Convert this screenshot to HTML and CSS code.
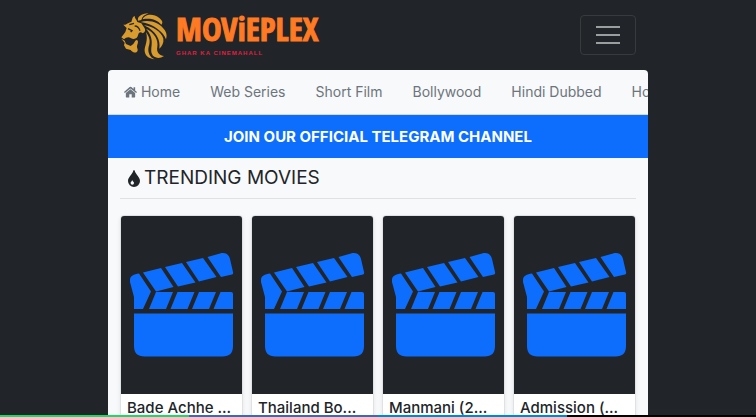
FILE: index.html
```
<!DOCTYPE html>
<html lang="en">
<head>
<meta charset="utf-8">
<meta name="viewport" content="width=device-width, initial-scale=1">
<title>Movieplex</title>
<link rel="stylesheet" href="styles.css">
</head>
<body>
<svg class="sprite" aria-hidden="true">
  <symbol id="clapper" viewBox="0 0 121 178">
    <path d="M9 64C9 60 13 58 18 57.500L30 75.500L22 93H13V81L9 66Z"/>
    <path d="M22 56.500L40 52L52.500 71L35 75.500Z"/>
    <path d="M44 51L61 47L74.500 66.500L57 70.500Z"/>
    <path d="M65 46L82 42L95.500 61L78 65.500Z"/>
    <path d="M86.500 41L99 37.500C105 36 108 39 109 43L112 56Q112.500 58 111 58.500L100 61Z"/>
    <path d="M35 76H52L45 93H28Z"/>
    <path d="M56.500 76H73.500L66.500 93H49.500Z"/>
    <path d="M78 76H95L88 93H71Z"/>
    <path d="M99.500 76H110Q112 76 112 78V93H92.500Z"/>
    <path d="M13 97.500H112V130Q112 140.500 101.500 140.500H23.500Q13 140.500 13 130Z"/>
  </symbol>
</svg>

<header class="topbar container">
  <a class="brand" href="#">
    <svg class="lion" viewBox="0 3 162 156" aria-hidden="true">
      <path d="M26 60L16 50C26 52 28 44 40 42C44 32 42 28 50 24C50 32 56 34 58 42L70 46L78 58C84 66 82 72 74 76C68 70 62 72 60 82C58 92 48 96 38 90C32 86 24 88 18 94L10 88C14 82 18 78 22 72Z"/>
      <path d="M10 92L20 98L24 108L38 114L46 108L52 98C60 92 62 102 58 110C54 120 62 122 58 130C54 138 42 132 38 126L24 122L18 112L20 104Z"/>
      <path d="M60 38C58 26 68 18 92 16C80 20 72 26 70 36Z"/>
      <path d="M74 34C78 20 104 14 124 30C136 40 134 46 130 50C116 34 96 30 74 34Z"/>
      <path d="M68 42C92 34 124 42 140 66C148 78 146 88 144 94C138 74 108 48 68 42Z"/>
      <path d="M78 52C104 54 130 72 136 92C138 104 132 114 124 122C128 96 116 70 78 52Z"/>
      <path d="M84 62C108 72 122 96 118 116C114 134 126 142 138 144C124 154 106 150 102 138C94 118 114 96 84 62Z"/>
      <path d="M84 72C98 92 96 104 92 116C88 134 96 148 110 154C92 152 82 144 80 130C78 116 92 98 84 72Z"/>
      <path class="cut" d="M30 62L42 68L38 72M50 54C60 54 64 62 66 68M34 50L48 46"/>
    </svg>
    <span class="wordmark">
      <span class="wordmark-name">MOViEPLEX</span>
      <span class="wordmark-tag">GHAR KA CINEMAHALL</span>
    </span>
  </a>
  <button class="toggler" type="button" aria-label="Toggle navigation">
    <svg viewBox="0 0 30 30" aria-hidden="true"><path d="M3 7h24M3 15h24M3 23h24"/></svg>
  </button>
</header>

<main class="panel container">
  <nav class="categories">
    <a href="#"><svg class="home" viewBox="0 0 14 12" aria-hidden="true"><path d="M7 3L2 7.200V11.500Q2 12 2.500 12H5.700V8.500H8.300V12H11.500Q12 12 12 11.500V7.200ZM14 6L12 4.300V1H10.300V2.800L7.900.7Q7 0 6.100.7L0 6L.9 7.200L7 2.100L13.100 7.200Z"/></svg> Home</a>
    <a href="#">Web Series</a>
    <a href="#">Short Film</a>
    <a href="#">Bollywood</a>
    <a href="#">Hindi Dubbed</a>
    <a href="#">Hollywood</a>
  </nav>
  <a class="telegram" href="#">JOIN OUR OFFICIAL TELEGRAM CHANNEL</a>
  <section class="trending">
    <h1 class="heading"><svg class="drop" viewBox="0 0 12 17" aria-hidden="true"><path fill-rule="evenodd" d="M6 0Q6.500 0 6.700.7C7.500 4 12 7 12 11A6 6 0 0 1 0 11C0 7 4.500 4 5.300.7Q5.500 0 6 0ZM4 10.500C3.700 11.500 2.600 12 2.600 13A1.700 1.700 0 0 0 6 13C6 12 4.800 11.500 4.500 10.500Q4.200 10 4 10.500Z"/></svg><span>TRENDING MOVIES</span></h1>
    <div class="grid">
      <a class="card" href="#"><svg class="poster" viewBox="0 0 121 178" aria-hidden="true"><use href="#clapper"/></svg><span class="title">Bade Achhe ...</span></a>
      <a class="card" href="#"><svg class="poster" viewBox="0 0 121 178" aria-hidden="true"><use href="#clapper"/></svg><span class="title">Thailand Bo...</span></a>
      <a class="card" href="#"><svg class="poster" viewBox="0 0 121 178" aria-hidden="true"><use href="#clapper"/></svg><span class="title">Manmani (2...</span></a>
      <a class="card" href="#"><svg class="poster" viewBox="0 0 121 178" aria-hidden="true"><use href="#clapper"/></svg><span class="title">Admission (...</span></a>
    </div>
  </section>
</main>

<div class="share">
  <a class="whatsapp" href="#" aria-label="WhatsApp"></a>
  <a class="facebook" href="#" aria-label="Facebook"></a>
  <a class="tele" href="#" aria-label="Telegram"></a>
  <a class="more" href="#" aria-label="More"></a>
</div>
</body>
</html>
```
FILE: styles.css
```
* { box-sizing: border-box; }
html { scrollbar-width: none; }
body {
  margin: 0;
  background: #212529;
  color: #212529;
  font: 16px/24px Inter, "Liberation Sans", sans-serif;
}
a { color: inherit; text-decoration: none; }
.sprite { position: absolute; width: 0; height: 0; }
.container { max-width: 540px; margin: 0 auto; }

.topbar {
  display: flex;
  align-items: center;
  justify-content: space-between;
  height: 70px;
  padding: 0 12px 0 10px;
}
.brand { display: flex; align-items: center; gap: 4px; }
.lion { width: 54px; height: 52px; fill: #d89b2e; }
.lion .cut { fill: none; stroke: #212529; stroke-width: 4; }
.wordmark { display: flex; flex-direction: column; gap: 4px; }
.wordmark-name {
  color: #ff7a22;
  font: bold 33px/32px "Liberation Sans Narrow", "Open Sans Condensed", "DejaVu Sans Condensed", sans-serif;
  -webkit-text-stroke: 1px #ff7a22;
}
.wordmark-tag {
  color: #e01e40;
  font: bold 6px/8px "Liberation Sans", sans-serif;
  letter-spacing: 1px;
}
.toggler {
  width: 56px;
  height: 40px;
  padding: 4px 12px;
  background: transparent;
  border: 1px solid #373b3e;
  border-radius: 4px;
}
.toggler svg { display: block; width: 30px; height: 30px; }
.toggler path { stroke: #9b9d9f; stroke-width: 2; }

.panel { background: #f8f9fa; border-radius: 4px 4px 0 0; overflow: hidden; }
.categories {
  display: flex;
  gap: 30px;
  height: 45px;
  padding: 0 16px;
  overflow: hidden;
  border-bottom: 1px solid #d5d9d9;
  color: #6c757d;
  font-size: 14px;
  line-height: 44px;
  white-space: nowrap;
}
.home { width: 13px; height: 12px; fill: currentColor; vertical-align: -1px; }
.telegram {
  display: block;
  padding: 10px;
  background: #0d6efd;
  color: #fff;
  font-size: 15px;
  font-weight: 700;
  line-height: 23px;
  text-align: center;
}
.trending { padding: 0 12px; }
.heading {
  display: flex;
  align-items: center;
  gap: 4px;
  margin: 0 0 16px;
  padding: 8px 8px;
  border-bottom: 1px solid #dee2e6;
  font-size: 19px;
  font-weight: 400;
  line-height: 24px;
}
.drop { width: 12px; height: 17px; fill: currentColor; }
.grid { display: grid; grid-template-columns: repeat(4, minmax(0, 1fr)); gap: 8px; }
.card {
  overflow: hidden;
  background: #fff;
  border: 1px solid #dfe1e3;
  border-radius: 4px;
  box-shadow: 0 2px 4px rgba(0, 0, 0, .08);
}
.poster { display: block; width: 100%; background: #212529; fill: #0d6efd; }
.title {
  display: block;
  padding: 2px 6px 8px;
  overflow: hidden;
  font-size: 15px;
  font-weight: 500;
  white-space: nowrap;
}

.share { position: fixed; right: 0; bottom: 0; left: 0; display: flex; height: 2px; }
.share a { flex: 1; }
.whatsapp { background: #25d366; }
.facebook { background: #4267b2; }
.tele { background: #0088cc; }
.more { background: #000; }
```
